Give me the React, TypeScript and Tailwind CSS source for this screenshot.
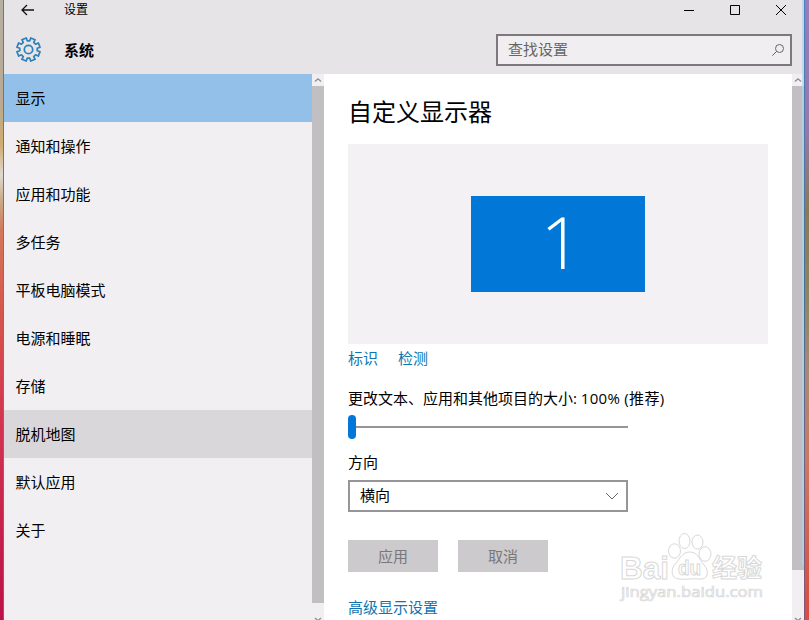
import { useState } from 'react';

const NAV_ITEMS = ['显示', '通知和操作', '应用和功能', '多任务', '平板电脑模式', '电源和睡眠', '存储', '脱机地图', '默认应用', '关于'];

function gearPath() {
  const points: string[] = [];
  const step = Math.PI / 4;
  for (let i = 0; i < 8; i++) {
    const a = i * step - Math.PI / 2 + step / 2;
    const corners: [number, number][] = [[-0.25, 8.8], [-0.2, 11.8], [0.2, 11.8], [0.25, 8.8]];
    corners.forEach(([offset, r]) => {
      points.push(`${(12.5 + r * Math.cos(a + offset)).toFixed(2)} ${(12.5 + r * Math.sin(a + offset)).toFixed(2)}`);
    });
  }
  return `M${points.join('L')}Z`;
}

function GearIcon() {
  return (
    <svg width="25" height="25" viewBox="0 0 25 25" fill="none" stroke="#2f80b8" strokeWidth="1.7" strokeLinejoin="round">
      <path d={gearPath()} />
      <circle cx="12.5" cy="12.5" r="4.2" />
    </svg>
  );
}

function ScrollBar({ thumb }: { thumb: string }) {
  return (
    <div className="flex w-3 shrink-0 flex-col bg-[#f1eff2]">
      <svg width="12" height="12" viewBox="0 0 12 12" fill="none" stroke="#8c8c8c" strokeWidth="1.3">
        <path d="M3 7.5L6 4.8L9 7.5" />
      </svg>
      <div className={`bg-[#c1bfc1] ${thumb}`} />
      <svg className="mt-auto" width="12" height="5" viewBox="0 0 12 5" fill="none" stroke="#8c8c8c" strokeWidth="1.3">
        <path d="M3 3L6 5.7L9 3" />
      </svg>
    </div>
  );
}

function TitleBar() {
  return (
    <header className="h-[74px] shrink-0 bg-[#e6e4e7]">
      <div className="flex h-5 items-center">
        <svg className="ml-[17px]" width="14" height="12" viewBox="0 0 14 12" fill="none" stroke="#111" strokeWidth="1.3">
          <path d="M13 6H1.2M6 1L1 6L6 11" />
        </svg>
        <span className="ml-[29px] text-xs">设置</span>
        <svg className="mr-4 ml-auto" width="104" height="12" viewBox="0 0 104 12" fill="none" stroke="#000">
          <path d="M0 6.5H10M46.5 1.5H55.5V10.5H46.5ZM92 1L102 11M102 1L92 11" />
        </svg>
      </div>
      <div className="flex h-[54px] items-start">
        <div className="mt-[17px] ml-3">
          <GearIcon />
        </div>
        <h1 className="mt-5 ml-[23px] text-[15px] leading-5 font-bold">系统</h1>
        <div className="mt-[14px] mr-3 ml-auto flex h-8 w-[296px] items-center justify-between border-2 border-[#7b797c] bg-[#f0eef1] pr-1.5 pl-2.5">
          <span className="relative -top-px text-[15px] text-[#666]">查找设置</span>
          <svg width="12" height="12" viewBox="0 0 12 12" fill="none" stroke="#666" strokeWidth="1">
            <circle cx="7.5" cy="4.5" r="4" />
            <path d="M4.7 7.3L0.3 11.7" />
          </svg>
        </div>
      </div>
    </header>
  );
}

function Sidebar({ active, onSelect }: { active: string; onSelect: (item: string) => void }) {
  return (
    <nav className="flex w-[308px] shrink-0 flex-col bg-[#f1eff2]">
      {NAV_ITEMS.map((item) => (
        <button
          key={item}
          onClick={() => onSelect(item)}
          className={`h-12 shrink-0 pl-[11.5px] text-left text-[15px] ${
            item === active ? 'bg-[#92c0e8]' : item === '脱机地图' ? 'bg-[#d9d7da]' : ''
          }`}
        >
          {item}
        </button>
      ))}
    </nav>
  );
}

function Watermark() {
  return (
    <svg
      className="absolute top-[530px] left-[616px]"
      width="152"
      height="76"
      viewBox="0 0 152 76"
      fill="#fff"
      stroke="#d8d8d8"
      strokeWidth="1"
      fontFamily='"Liberation Sans", "Noto Sans CJK SC", sans-serif'
    >
      <text x="4" y="48.5" fontSize="32" fontWeight="bold" textLength="49" lengthAdjust="spacingAndGlyphs">Bai</text>
      <ellipse cx="58.5" cy="21" rx="6" ry="7.2" />
      <ellipse cx="68.5" cy="11" rx="5.5" ry="7.5" />
      <ellipse cx="81.5" cy="12" rx="5.5" ry="7" />
      <ellipse cx="89" cy="24" rx="6" ry="7.3" />
      <path d="M73.5 22C66 22 64 29 60 33C54 39 55 49 63 49C68 50 78 48 83 49C92 50 94 42 88 35C83 29 82 22 73.5 22Z" />
      <text x="62" y="45" fontSize="20" fontWeight="bold" textLength="23" lengthAdjust="spacingAndGlyphs">du</text>
      <text x="96" y="47" fontSize="25" fontWeight="bold" textLength="50">经验</text>
      <text x="5" y="67" fontSize="14" strokeWidth="0.7" fontFamily='"Open Sans", sans-serif' textLength="142" lengthAdjust="spacingAndGlyphs">
        jingyan.baidu.com
      </text>
    </svg>
  );
}

function DisplayPanel() {
  return (
    <main className="flex flex-1 flex-col items-start bg-white pl-6 text-[15px] leading-5">
      <h2 className="mt-5 text-2xl leading-9">自定义显示器</h2>
      <div className="mt-[14px] flex h-[200px] w-[420px] shrink-0 items-start justify-center bg-[#f3f1f4] pt-[52px]">
        <div className="flex h-24 w-[174px] items-center justify-center bg-[#0177d8] font-['Open_Sans',sans-serif] text-[72px] font-light text-white">
          <span className="relative -top-[3px] left-[3px]">1</span>
        </div>
      </div>
      <div className="mt-1 flex gap-5 text-[#0f75b0]">
        <a href="#identify">标识</a>
        <a href="#detect">检测</a>
      </div>
      <p className="mt-5">
        更改文本、应用和其他项目的大小: <span className="tracking-[0.3px]">100% (推荐)</span>
      </p>
      <div className="mt-[7px] flex h-6 w-[280px] shrink-0 items-center">
        <div className="h-6 w-2 rounded-full bg-[#0177d8]" />
        <div className="h-0.5 flex-1 bg-[#979599]" />
      </div>
      <label className="mt-[13px]">方向</label>
      <div className="mt-2 flex h-8 w-[280px] shrink-0 items-center justify-between border-2 border-[#979599] pr-[7px] pl-2.5">
        <span className="pb-0.5">横向</span>
        <svg width="14" height="8" viewBox="0 0 14 8" fill="none" stroke="#666">
          <path d="M1 1L7 7L13 1" />
        </svg>
      </div>
      <div className="mt-7 flex gap-5 text-[#797779]">
        <button className="h-8 w-[90px] bg-[#cccacd]">应用</button>
        <button className="h-8 w-[90px] bg-[#cccacd]">取消</button>
      </div>
      <a href="#advanced" className="mt-[25px] text-[#0f75b0]">高级显示设置</a>
    </main>
  );
}

export default function App() {
  const [active, setActive] = useState('显示');

  return (
    <div className="relative flex h-[620px] w-[809px] overflow-hidden font-['Open_Sans','Noto_Sans_CJK_SC',sans-serif] text-black">
      <div className="w-[3px] shrink-0 bg-[linear-gradient(to_bottom,#b5b0a4_0px,#b9a992_100px,#d0ad72_145px,#e0d8d0_175px,#c9ac88_200px,#d3785c_230px,#d65a4c_300px,#d43450_420px,#bd1048_620px)]" />
      <div className="w-px shrink-0 bg-linear-to-b from-[#3c84b4] via-[#5a7c9c] to-[#8450a0]" />
      <div className="flex w-[800px] shrink-0 flex-col">
        <TitleBar />
        <div className="flex min-h-0 flex-1">
          <Sidebar active={active} onSelect={setActive} />
          <ScrollBar thumb="h-[517px]" />
          <DisplayPanel />
          <ScrollBar thumb="h-[484px]" />
        </div>
      </div>
      <div className="w-px shrink-0 bg-linear-to-b from-[#4a7fc0] via-[#47708c] to-[#8a5478]" />
      <div className="flex-1 bg-[linear-gradient(to_bottom,#9a7cb8_0px,#9678a8_130px,#8c7858_210px,#8c8464_290px,#a88878_370px,#cc7864_460px,#d45044_600px)]" />
      <div className="absolute top-0 left-[802px] h-[565px] w-0.5 bg-[#b4d2ec]/70" />
      <Watermark />
    </div>
  );
}
